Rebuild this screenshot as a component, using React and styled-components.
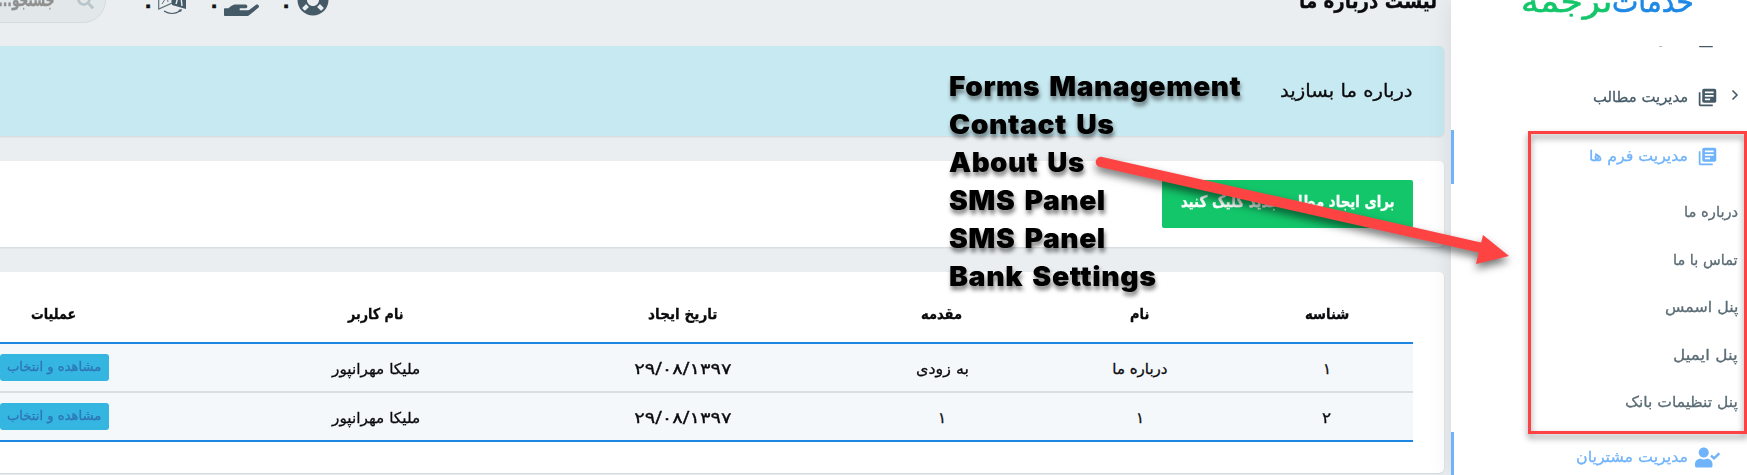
import React, { useLayoutEffect, useRef, useState } from "react";
import styled, { createGlobalStyle } from "styled-components";
import { MdLibraryBooks } from "react-icons/md";
import { FaUserCheck, FaHandHolding, FaLifeRing, FaSearch } from "react-icons/fa";

const GlobalStyle = createGlobalStyle`
  * { box-sizing: border-box; }
  body {
    margin: 0;
    overflow: hidden;
    font-family: "DejaVu Sans", sans-serif;
    color: #0b0b0d;
    -webkit-text-stroke: 0.3px currentColor;
  }
`;

const FitOuter = styled.span`
  display: inline-flex;
  flex: none;
  justify-content: flex-end;
  direction: ltr;
  line-height: 1;
`;
const FitInner = styled.span`
  flex: none;
  white-space: nowrap;
  direction: ${(p) => p.$dir};
  transform-origin: right center;
`;

function FitText({ width, dir = "rtl", children }) {
  const ref = useRef(null);
  const [scale, setScale] = useState(1);
  useLayoutEffect(() => {
    const natural = ref.current.offsetWidth;
    if (natural) setScale(width / natural);
  }, [width, children]);
  return (
    <FitOuter style={{ width }}>
      <FitInner ref={ref} $dir={dir} style={{ transform: `scaleX(${scale})` }}>
        {children}
      </FitInner>
    </FitOuter>
  );
}

const Page = styled.div`
  position: relative;
  display: flex;
  width: 1747px;
  height: 475px;
  overflow: hidden;
  background: #eaeef1;
`;

const Main = styled.main`
  width: 1451px;
  flex: none;
  height: 475px;
  overflow: hidden;
`;

const TopBar = styled.header`
  display: flex;
  align-items: center;
  height: 92px;
  margin-top: -46px;
  padding-right: 14px;
`;
const SearchBox = styled.div`
  display: flex;
  align-items: center;
  justify-content: flex-end;
  gap: 23px;
  width: 146px;
  height: 46px;
  margin-left: -40px;
  padding: 0 11px 0 0;
  border: 1px solid #d5dade;
  border-radius: 23px;
  background: #e2e7ea;
  color: #8f8f8f;
  font-size: 18px;
  font-weight: bold;
  svg { color: #b9c5cb; }
`;
const Counters = styled.div`
  display: flex;
  align-items: center;
  margin-left: 39px;
`;
const Counter = styled.div`
  display: flex;
  align-items: center;
  width: ${(p) => p.$width}px;
  color: #445a67;
`;
const Count = styled.span`
  display: flex;
  justify-content: center;
  width: 6px;
  margin: 0 ${(p) => p.$gap}px 0 0;
  padding-top: 9px;
  color: #111;
  font-size: 20px;
  font-weight: bold;
  line-height: 1;
`;
const PageTitle = styled.h1`
  margin: 0 0 0 auto;
  padding-top: 2px;
  font-size: 20px;
  font-weight: bold;
  line-height: 1;
`;

const Stack = styled.div`
  display: flex;
  flex-direction: column;
  gap: 25px;
  width: 1594px;
  margin-left: -150px;
`;
const Panel = styled.section`
  height: ${(p) => p.$height}px;
  padding: 0 31px;
  border-radius: 5px;
  background: ${(p) => (p.$info ? "#c7e9f1" : "#fff")};
  box-shadow: 0 1px 2px rgba(60, 80, 95, 0.14);
  display: flex;
  align-items: ${(p) => p.$align || "center"};
  justify-content: flex-end;
  font-size: 18px;
`;
const CreateButton = styled.button`
  display: flex;
  align-items: center;
  justify-content: center;
  width: 251px;
  height: 48px;
  padding: 0 0 4px;
  border: 0;
  border-radius: 2px;
  background: #13c66a;
  color: #fff;
  font: bold 16px "DejaVu Sans", sans-serif;
`;

const columns = "172px 202px 194px 324px 290px 354px";
const Table = styled.div`
  width: 1536px;
  flex: none;
  direction: rtl;
  font-size: 15px;
  border-bottom: 2px solid #1a87e0;
`;
const Row = styled.div`
  display: grid;
  grid-template-columns: ${columns};
  align-items: center;
  justify-items: center;
  height: ${(p) => (p.$head ? 72 : 47)}px;
  padding-top: ${(p) => (p.$head ? 14 : 4)}px;
  font-weight: ${(p) => (p.$head ? "bold" : "normal")};
  background: ${(p) => (p.$head ? "#fff" : "#f4f8fb")};
  border-bottom: ${(p) => (p.$head ? "2px solid #1a87e0" : "0")};
  & + & + & {
    height: 49px;
    border-top: 2px solid #d9dee2;
  }
`;
const ViewButton = styled.a`
  display: flex;
  align-items: center;
  justify-content: center;
  width: 109px;
  height: 27px;
  margin-top: -4px;
  padding-bottom: 3px;
  border-radius: 3px;
  background: #34b6e1;
  color: #2f76b5;
  font-size: 13px;
`;

const Sidebar = styled.aside`
  position: relative;
  width: 296px;
  flex: none;
  height: 475px;
  direction: rtl;
  background: #fff;
  box-shadow: 0 0 24px rgba(0, 0, 0, 0.09);
`;
const Logo = styled.div`
  display: flex;
  align-items: flex-start;
  height: 46px;
  padding-right: 53px;
  font-size: 31px;
  line-height: 1;
  overflow: hidden;
  -webkit-text-stroke: 0.6px currentColor;
`;
const LogoPart = styled.span`
  margin-top: -14px;
  color: ${(p) => p.$color};
`;
const NavScroll = styled.nav`
  height: 429px;
  overflow: hidden;
`;
const NavList = styled.div`
  margin-top: -34px;
`;
const NavItem = styled.div`
  display: flex;
  align-items: center;
  height: 54px;
  margin-bottom: ${(p) => (p.$open ? 0 : 5)}px;
  padding: 0 8px 2px 0;
  border-left: 3px solid ${(p) => (p.$active ? "#6fb3fa" : "transparent")};
  color: ${(p) => (p.$active ? "#6fb3fa" : "#445a67")};
  font-size: 15px;
`;
const Chevron = styled.svg`
  width: 8px;
  height: 12px;
  flex: none;
  margin-top: -4px;
  visibility: ${(p) => (p.$hidden ? "hidden" : "visible")};
`;
const NavIcon = styled.span`
  display: flex;
  justify-content: center;
  width: 25px;
  margin: 0 11px 0 7px;
  svg { display: block; flex: none; }
`;
const SubList = styled.div`
  display: flex;
  flex-direction: column;
  padding: 5px 9px 5px 0;
`;
const SubItem = styled.div`
  display: flex;
  align-items: center;
  height: 47.5px;
  color: #5b6c75;
  font-size: 15px;
`;

const Callouts = styled.div`
  position: absolute;
  left: 949px;
  top: 67px;
  display: flex;
  flex-direction: column;
  color: #000;
  font: 900 27px/38px Inter, sans-serif;
  letter-spacing: 0.5px;
  word-spacing: 3px;
  -webkit-text-stroke: 0;
  text-shadow: 1px 4px 4px rgba(0, 0, 0, 0.5);
`;
const CalloutLine = styled.div`
  display: flex;
  height: 38px;
  align-items: center;
`;
const Frame = styled.div`
  position: absolute;
  left: 1528px;
  top: 131px;
  width: 219px;
  height: 303px;
  border: 3px solid #fc4242;
  filter: drop-shadow(0 4px 3px rgba(0, 0, 0, 0.45));
`;
const Arrow = styled.svg`
  position: absolute;
  left: 1080px;
  top: 140px;
  filter: drop-shadow(0 5px 4px rgba(0, 0, 0, 0.55));
`;

const TranslateSvg = styled.svg`
  flex: none;
  margin-top: -8px;
`;
const TranslateIcon = () => (
  <TranslateSvg width="28" height="38" viewBox="0 0 28 38" fill="none">
    <path d="M.7 8 14 13v13L.7 32Z" stroke="#5c707c" strokeWidth="1.2" />
    <path d="M4 27 9 19l1 6" stroke="#5c707c" strokeWidth="1" />
    <path d="M14 13 28 8v24l-14-4Z" fill="#445a67" />
    <path d="m18 27 2-7 3 0 1 9" stroke="#eaeef1" strokeWidth="1.4" />
    <path d="M6 34q8 5 16 0" stroke="#445a67" strokeWidth="1.1" />
    <path d="m20 33 4-1-1 3Z" fill="#445a67" />
  </TranslateSvg>
);

const headers = [
  ["شناسه", 44], ["نام", 19], ["مقدمه", 41], ["تاریخ ایجاد", 69], ["نام کاربر", 55], ["عملیات", 45],
];
const rows = [
  [["۱", 8], ["درباره ما", 55], ["به زودی", 53], ["۲۹/۰۸/۱۳۹۷", 98], ["ملیکا مهرانپور", 88]],
  [["۲", 9], ["۱", 8], ["۱", 8], ["۲۹/۰۸/۱۳۹۷", 98], ["ملیکا مهرانپور", 88]],
];
const subItems = [
  ["درباره ما", 54], ["تماس با ما", 65], ["پنل اسمس", 73], ["پنل ایمیل", 65], ["پنل تنظیمات بانک", 113],
];
const callouts = [
  ["Forms Management", 292], ["Contact Us", 165], ["About Us", 136],
  ["SMS Panel", 157], ["SMS Panel", 157], ["Bank Settings", 208],
];

function NavEntry({ label, width, icon, active, open, chevron }) {
  return (
    <NavItem $active={active} $open={open}>
      <Chevron $hidden={!chevron} viewBox="0 0 8 12" fill="none" stroke="currentColor" strokeWidth="1.6">
        <path d="m1.5 1.5 4.5 4.5-4.5 4.5" />
      </Chevron>
      <NavIcon>{icon}</NavIcon>
      <FitText width={width}>{label}</FitText>
    </NavItem>
  );
}

export default function App() {
  return (
    <Page>
      <GlobalStyle />
      <Main>
        <TopBar>
          <SearchBox>
            <FitText width={56}>جستجو...</FitText>
            <FaSearch size={17} />
          </SearchBox>
          <Counters>
            <Counter $width={66}><Count $gap={7}>۰</Count><TranslateIcon /></Counter>
            <Counter $width={72}><Count $gap={7}>۰</Count><FaHandHolding size={35} /></Counter>
            <Counter $width={60}><Count $gap={8}>۰</Count><FaLifeRing size={32} /></Counter>
          </Counters>
          <PageTitle><FitText width={138}>لیست درباره ما</FitText></PageTitle>
        </TopBar>
        <Stack>
          <Panel $info $height={90}><FitText width={133}>درباره ما بسازید</FitText></Panel>
          <Panel $height={86}>
            <CreateButton><FitText width={214}>برای ایجاد مطلب جدید کلیک کنید</FitText></CreateButton>
          </Panel>
          <Panel $height={201} $align="flex-start">
            <Table>
              <Row $head>
                {headers.map(([t, w]) => <FitText key={t} width={w}>{t}</FitText>)}
              </Row>
              {rows.map((cells, r) => (
                <Row key={r}>
                  {cells.map(([t, w], c) => <FitText key={c} width={w} dir={c === 3 ? "ltr" : "rtl"}>{t}</FitText>)}
                  <ViewButton><FitText width={94}>مشاهده و انتخاب</FitText></ViewButton>
                </Row>
              ))}
            </Table>
          </Panel>
        </Stack>
      </Main>
      <Sidebar>
        <Logo>
          <LogoPart $color="#1e88e5"><FitText width={82}>خدمات</FitText></LogoPart>
          <LogoPart $color="#13c66a"><FitText width={91}>ترجمه</FitText></LogoPart>
        </Logo>
        <NavScroll>
          <NavList>
            <NavEntry label="مدیریت مطالب" width={95} icon={<MdLibraryBooks size={21} />} />
            <NavEntry label="مدیریت مطالب" width={95} icon={<MdLibraryBooks size={21} />} chevron />
            <NavEntry label="مدیریت فرم ها" width={99} icon={<MdLibraryBooks size={21} />} active open />
            <SubList>
              {subItems.map(([t, w]) => <SubItem key={t}><FitText width={w}>{t}</FitText></SubItem>)}
            </SubList>
            <NavEntry label="مدیریت مشتریان" width={112} icon={<FaUserCheck size={25} />} active />
          </NavList>
        </NavScroll>
      </Sidebar>
      <Callouts>
        {callouts.map(([t, w], i) => (
          <CalloutLine key={i}><FitText width={w} dir="ltr">{t}</FitText></CalloutLine>
        ))}
      </Callouts>
      <Frame />
      <Arrow width="440" height="140" viewBox="0 0 440 140">
        <path d="M21 22 402 108" stroke="#fe4343" strokeWidth="10.5" strokeLinecap="round" />
        <path d="M403 95 429 116 396 124Z" fill="#fe4343" />
      </Arrow>
    </Page>
  );
}
